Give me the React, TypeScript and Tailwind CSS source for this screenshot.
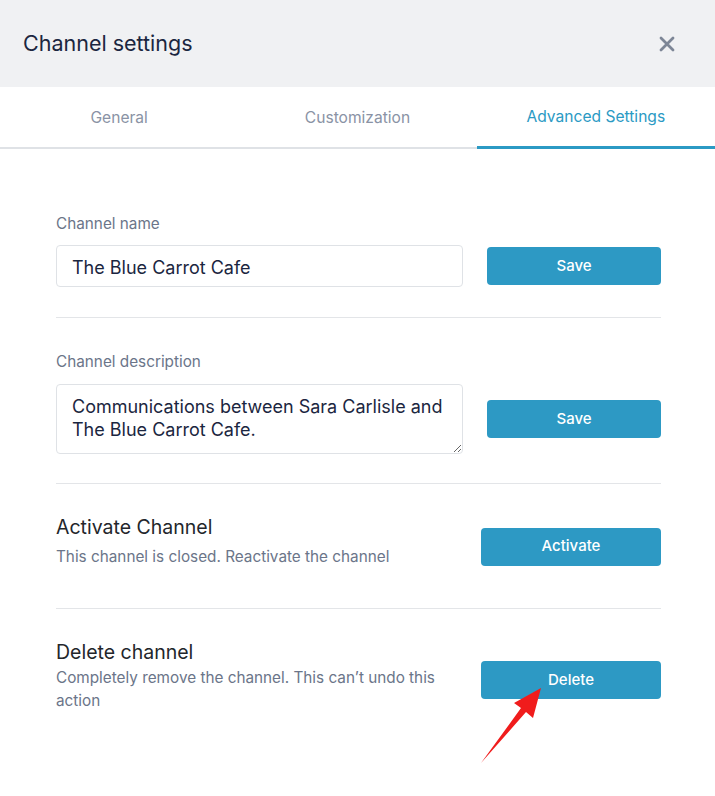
import React from 'react';

const font = { fontFamily: 'Inter, "Noto Sans", sans-serif' };

const Divider = () => <div className="h-px bg-[#e3e5e8]" />;

const PrimaryButton: React.FC<{ label: string; className?: string }> = ({ label, className = '' }) => (
  <button className={`h-[38px] rounded-[4px] bg-[#2d99c4] text-[15px] font-medium text-white ${className}`}>
    {label}
  </button>
);

export default function App() {
  const tabs = ['General', 'Customization', 'Advanced Settings'];
  return (
    <div className="relative w-[715px] h-[796px] bg-white overflow-hidden" style={font}>
      {/* header */}
      <div className="h-[87px] bg-[#f0f1f3] flex items-center justify-between pl-[23px] pr-[40px]">
        <h1 className="text-[21.5px] text-[#1b2640]">Channel settings</h1>
        <svg width="16" height="16" viewBox="0 0 16 16" className="text-[#7d8696]">
          <path d="M2 2L14 14M14 2L2 14" stroke="currentColor" strokeWidth="2.8" strokeLinecap="round" />
        </svg>
      </div>

      {/* tabs */}
      <div className="flex h-[62px] border-b-2 border-[#dfe2e6]">
        {tabs.map((t, i) => (
          <div
            key={t}
            className={`flex-1 flex items-center justify-center text-[15.6px] -mb-[2px] ${
              i === 2 ? 'text-[#2b9ac4] border-b-[3px] border-[#2b9ac4] pt-[1px]' : 'text-[#8a93a5]'
            }`}
          >
            {t}
          </div>
        ))}
      </div>

      <div className="px-[56px] pr-[54px]">
        {/* channel name */}
        <div className="pt-[65px] pb-[30px]">
          <div className="text-[15.3px] leading-[20px] text-[#6b7589] mb-[11px]">Channel name</div>
          <div className="flex items-center justify-between">
            <div className="w-[407px] h-[42px] border border-[#dfe2e6] rounded-[4px] flex items-center px-[15px] pt-[2px] text-[18px] text-[#1b2640]">
              The Blue Carrot Cafe
            </div>
            <PrimaryButton label="Save" className="w-[174px]" />
          </div>
        </div>
        <Divider />

        {/* channel description */}
        <div className="pt-[34px] pb-[29px]">
          <div className="text-[15.3px] leading-[20px] text-[#6b7589] mb-[12px]">Channel description</div>
          <div className="flex items-center justify-between">
            <textarea
              readOnly
              defaultValue="Communications between Sara Carlisle and The Blue Carrot Cafe."
              className="w-[407px] h-[70px] border border-[#dfe2e6] rounded-[4px] pl-[15px] pr-[6px] pt-[10px] text-[18px] leading-[23px] text-[#1b2640] outline-none resize-y"
              style={font}
            />
            <PrimaryButton label="Save" className="w-[174px]" />
          </div>
        </div>
        <Divider />

        {/* activate */}
        <div className="pt-[29px] pb-[40px] flex items-center justify-between">
          <div className="w-[407px]">
            <div className="text-[19.5px] leading-[28px] text-[#23262b]">Activate Channel</div>
            <div className="mt-[4px] text-[15.3px] leading-[23px] text-[#6b7589]">This channel is closed. Reactivate the channel</div>
          </div>
          <PrimaryButton label="Activate" className="w-[180px] mt-[12px]" />
        </div>
        <Divider />

        {/* delete */}
        <div className="pt-[29px] flex items-center justify-between">
          <div className="w-[407px]">
            <div className="text-[19.5px] leading-[28px] text-[#23262b]">Delete channel</div>
            <div className="text-[15.3px] leading-[23px] text-[#6b7589]">
              Completely remove the channel. This can’t undo this action
            </div>
          </div>
          <PrimaryButton label="Delete" className="w-[180px] mt-[10px]" />
        </div>
      </div>

      {/* annotation arrow */}
      <svg className="absolute left-0 top-0 pointer-events-none" width="715" height="796">
        <polygon points="541,688 533,718 526,712 481,763 521,708 514,703" fill="#f01c1c" />
      </svg>
    </div>
  );
}
